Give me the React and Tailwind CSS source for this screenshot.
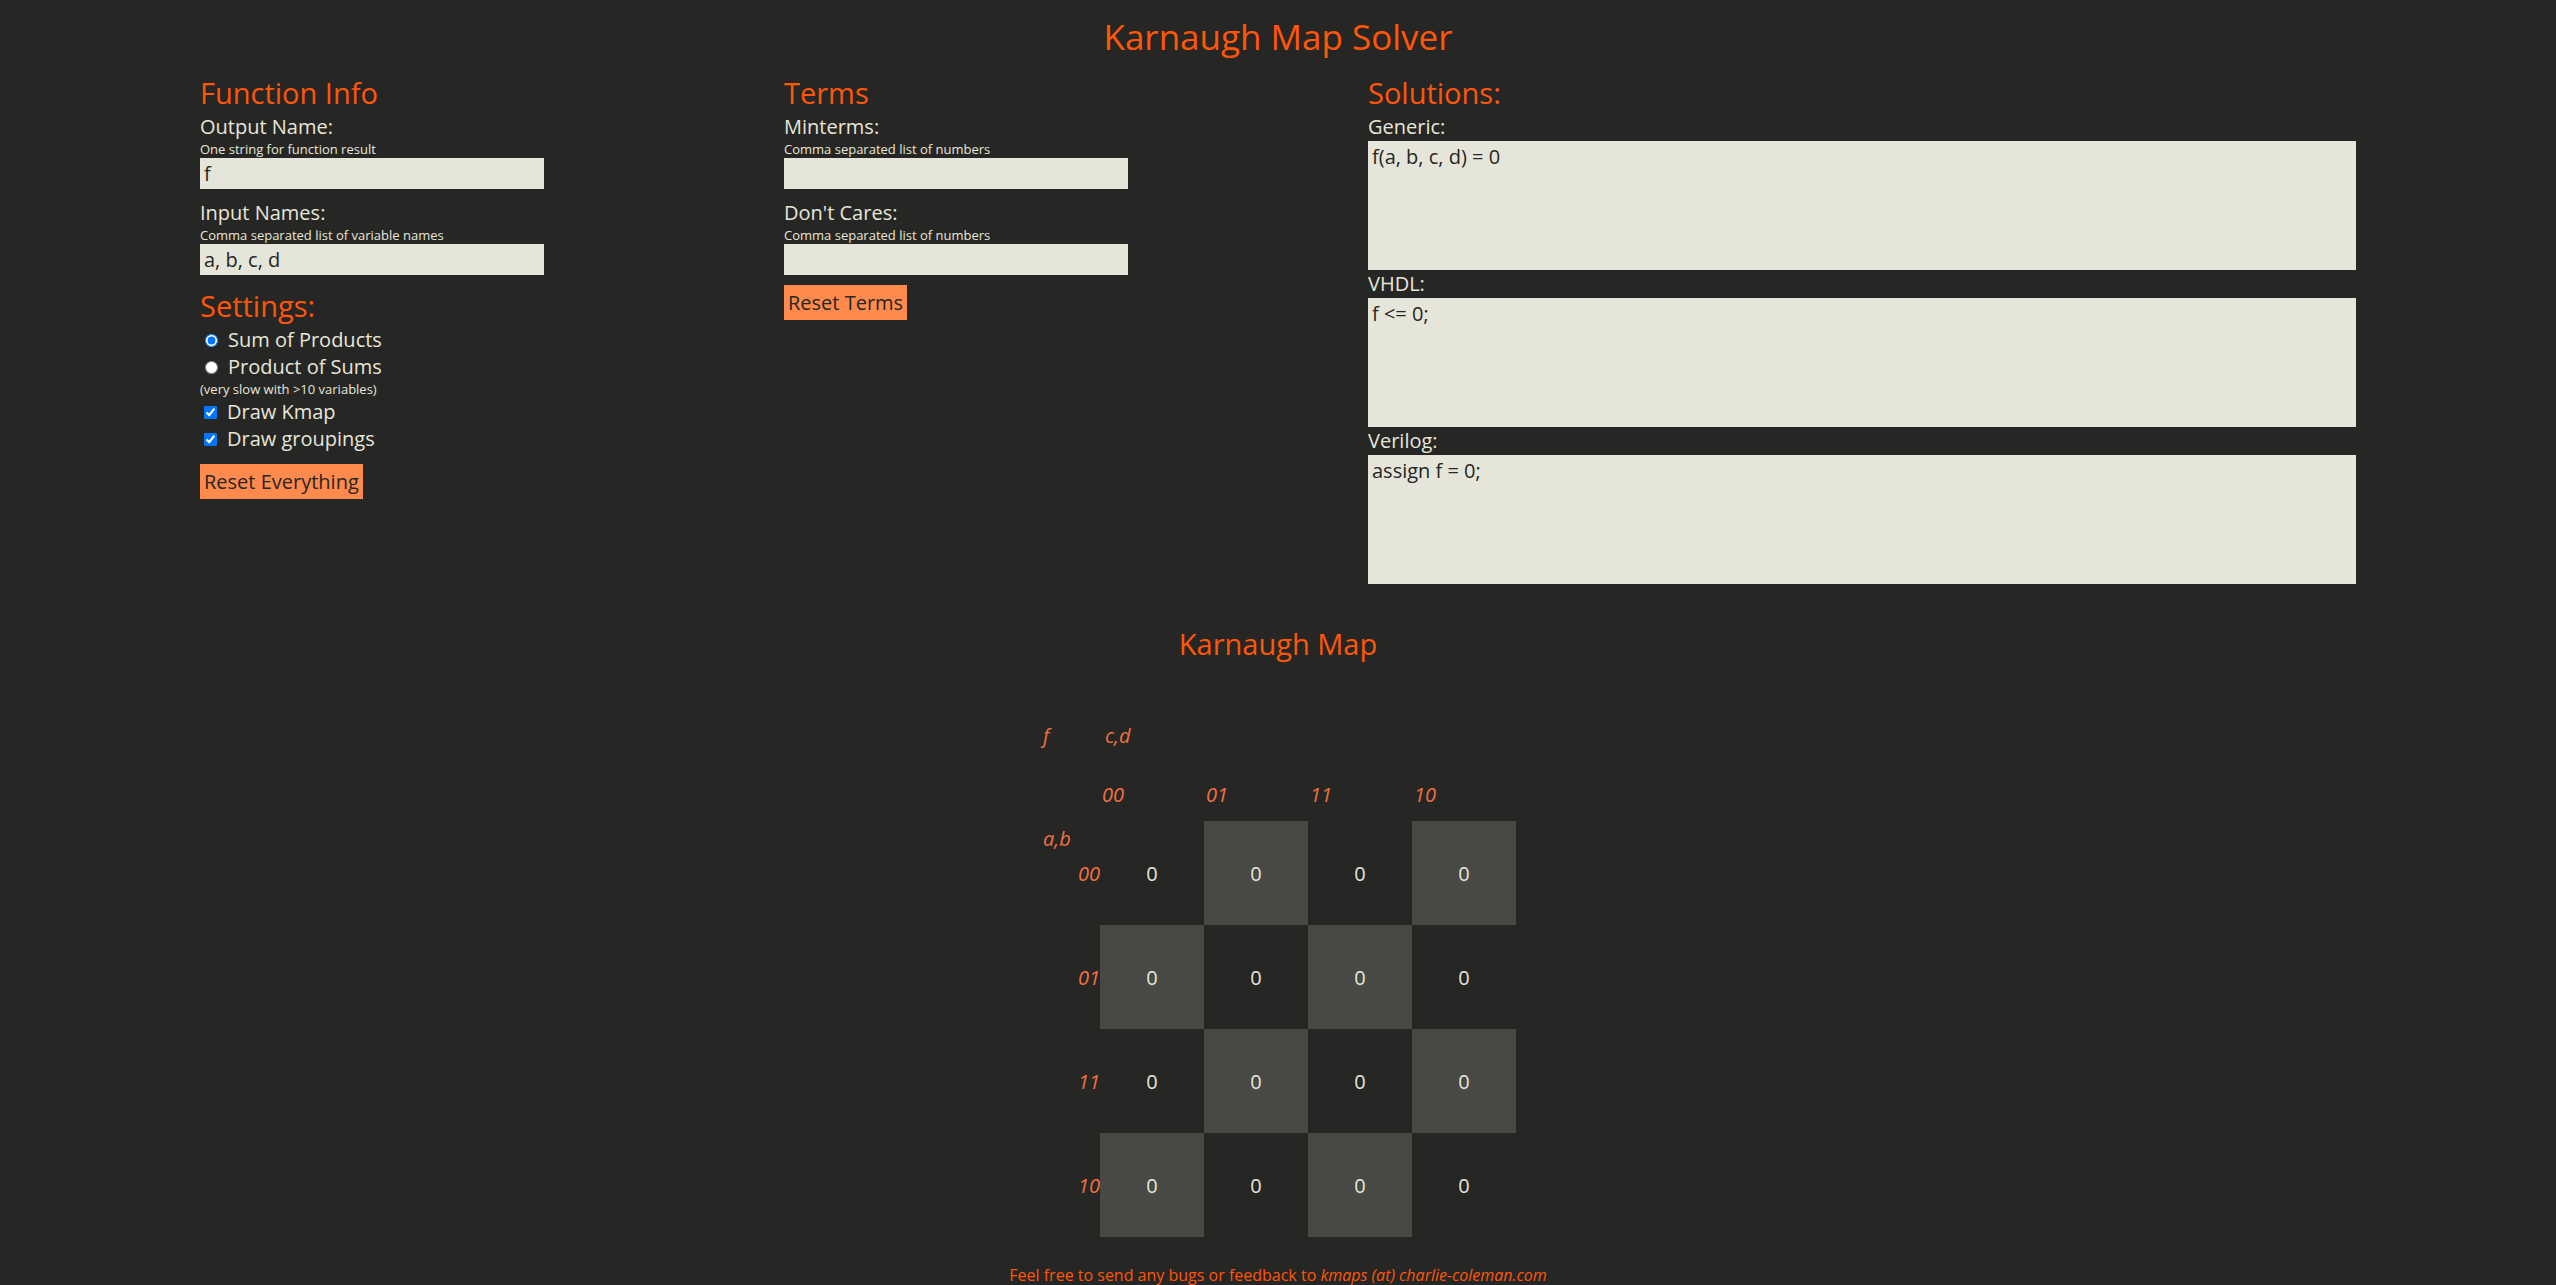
import { useState } from 'react';

const Field = ({ label, hint, value }) => (
  <div className="mb-[10px]">
    <div className="text-[20px] leading-[27px]">{label}</div>
    <div className="text-[13px] leading-[18px]">{hint}</div>
    <input
      type="text"
      defaultValue={value}
      className="block w-[344px] h-[31px] bg-[#e5e5d9] text-[#262624] text-[20px] px-[4px] outline-none"
    />
  </div>
);

const Solution = ({ label, value }) => (
  <div>
    <div className="text-[20px] leading-[28px]">{label}</div>
    <textarea
      readOnly
      value={value}
      className="block w-full h-[129px] bg-[#e5e5d9] text-[#262624] text-[20px] leading-[27px] px-[4px] pt-[2px] resize-none outline-none"
    />
  </div>
);

const cols = ['00', '01', '11', '10'];

const App = () => {
  const [mode, setMode] = useState('sop');

  return (
    <div className="min-h-screen bg-[#262624] text-[#e6e6da] font-['Open_Sans',sans-serif]">
      <h1 className="pt-[13px] text-center text-[35px] leading-[48px] text-[#ff560a]">Karnaugh Map Solver</h1>

      <div className="w-[2156px] mx-auto mt-[11px] flex">
        {/* Function info + settings */}
        <div className="w-[584px]">
          <h2 className="text-[29px] leading-[41px] text-[#ff560a]">Function Info</h2>
          <Field label="Output Name:" hint="One string for function result" value="f" />
          <Field label="Input Names:" hint="Comma separated list of variable names" value="a, b, c, d" />

          <h2 className="text-[29px] leading-[41px] text-[#ff560a]">Settings:</h2>
          <label className="flex items-center text-[20px] leading-[27px]">
            <input
              type="radio"
              name="mode"
              checked={mode === 'sop'}
              onChange={() => setMode('sop')}
              className="w-[13px] h-[13px] ml-[5px] mt-[2px]"
            />
            <span className="ml-[10px]">Sum of Products</span>
          </label>
          <label className="flex items-center text-[20px] leading-[27px]">
            <input
              type="radio"
              name="mode"
              checked={mode === 'pos'}
              onChange={() => setMode('pos')}
              className="w-[13px] h-[13px] ml-[5px] mt-[2px]"
            />
            <span className="ml-[10px]">Product of Sums</span>
          </label>
          <div className="text-[13px] leading-[18px]">(very slow with &gt;10 variables)</div>
          <label className="flex items-center text-[20px] leading-[27px]">
            <input type="checkbox" defaultChecked className="w-[13px] h-[13px] ml-[4px] mt-[2px]" />
            <span className="ml-[10px]">Draw Kmap</span>
          </label>
          <label className="flex items-center text-[20px] leading-[27px]">
            <input type="checkbox" defaultChecked className="w-[13px] h-[13px] ml-[4px] mt-[2px]" />
            <span className="ml-[10px]">Draw groupings</span>
          </label>
          <button className="mt-[12px] bg-[#ff8a4d] text-[#262624] text-[20px] leading-[27px] px-[4px] py-[4px]">
            Reset Everything
          </button>
        </div>

        {/* Terms */}
        <div className="w-[584px]">
          <h2 className="text-[29px] leading-[41px] text-[#ff560a]">Terms</h2>
          <Field label="Minterms:" hint="Comma separated list of numbers" value="" />
          <Field label="Don't Cares:" hint="Comma separated list of numbers" value="" />
          <button className="bg-[#ff8a4d] text-[#262624] text-[20px] leading-[27px] px-[4px] py-[4px]">
            Reset Terms
          </button>
        </div>

        {/* Solutions */}
        <div className="w-[988px]">
          <h2 className="text-[29px] leading-[41px] text-[#ff560a]">Solutions:</h2>
          <Solution label="Generic:" value="f(a, b, c, d) = 0" />
          <Solution label="VHDL:" value="f <= 0;" />
          <Solution label="Verilog:" value="assign f = 0;" />
        </div>
      </div>

      <h2 className="mt-[39px] text-center text-[29px] leading-[41px] text-[#ff560a]">Karnaugh Map</h2>

      {/* Map */}
      <div className="w-fit mx-auto mt-[58px] italic text-[20px] leading-[27px] text-[#f2703f]">
        <div className="flex h-[59px]">
          <div className="w-[60px] pl-[3px]">f</div>
          <div className="pl-[5px]">c,d</div>
        </div>
        <div className="flex h-[40px]">
          <div className="w-[60px]" />
          {cols.map(c => (
            <div key={c} className="w-[104px] pl-[2px]">{c}</div>
          ))}
        </div>
        {cols.map((r, ri) => (
          <div key={r} className="flex h-[104px]">
            <div className="relative w-[60px] flex items-center justify-end">
              {ri === 0 && <span className="absolute left-[3px] top-[4px]">a,b</span>}
              <span>{r}</span>
            </div>
            {cols.map((c, ci) => (
              <div
                key={c}
                className={`w-[104px] flex items-center justify-center not-italic text-[#e6e6da] ${
                  (ri + ci) % 2 === 1 ? 'bg-[#484845]' : ''
                }`}
              >
                0
              </div>
            ))}
          </div>
        ))}
      </div>

      <div className="mt-[27px] text-center text-[16px] leading-[22px] text-[#ff560a]">
        Feel free to send any bugs or feedback to <em>kmaps (at) charlie-coleman.com</em>
      </div>
    </div>
  );
};

export default App;
